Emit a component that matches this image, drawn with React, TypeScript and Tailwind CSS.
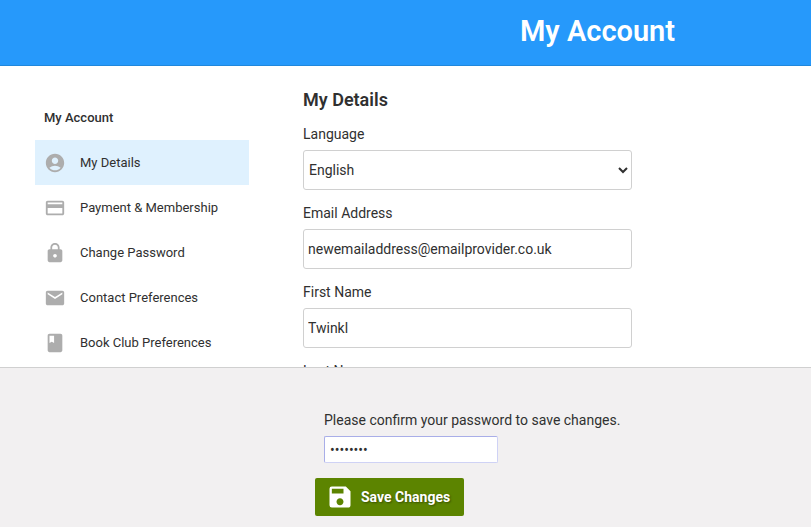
import { MdAccountCircle, MdClass, MdLock, MdMail, MdPayment, MdSave } from "react-icons/md";

const links = [
  { label: "My Details", Icon: MdAccountCircle, active: true },
  { label: "Payment & Membership", Icon: MdPayment, active: false },
  { label: "Change Password", Icon: MdLock, active: false },
  { label: "Contact Preferences", Icon: MdMail, active: false },
  { label: "Book Club Preferences", Icon: MdClass, active: false },
];

const fields = [
  { id: "email", label: "Email Address", value: "newemailaddress@emailprovider.co.uk" },
  { id: "first-name", label: "First Name", value: "Twinkl" },
  { id: "last-name", label: "Last Name", value: "" },
];

const control = "block h-10 w-full rounded-[3px] border border-[#d0d0d0] bg-white text-sm text-[#303030]";

export default function App() {
  return (
    <div className="flex h-screen flex-col overflow-hidden bg-white font-['Roboto','Liberation_Sans',sans-serif] text-[#303030]">
      <header className="flex h-[66px] shrink-0 items-center justify-center border-b border-[#2087dc] bg-[#2699fb] pb-1 pl-96">
        <h1 className="text-[29px] leading-9 font-semibold text-white">My Account</h1>
      </header>

      <main className="flex min-h-0 flex-1 overflow-hidden">
        <nav aria-label="Account" className="ml-[35px] w-[214px] shrink-0 pt-10">
          <h2 className="mb-[11px] px-[9px] text-[13px] leading-[23px] font-medium">My Account</h2>
          <ul>
            {links.map(({ label, Icon, active }) => (
              <li key={label}>
                <a
                  href="#"
                  aria-current={active ? "page" : undefined}
                  className={`flex h-[45px] items-center gap-3.5 px-[9px] text-[13px] ${active ? "bg-[#dff1fe]" : ""}`}
                >
                  <Icon className="size-[22px] text-[#adadad]" aria-hidden="true" />
                  {label}
                </a>
              </li>
            ))}
          </ul>
        </nav>

        <form className="ml-[54px] w-[329px] pt-5">
          <h2 className="text-lg leading-7 font-semibold">My Details</h2>
          <div className="mt-2 mb-[11px]">
            <label htmlFor="language" className="block pb-1 text-sm leading-6">Language</label>
            <select id="language" className={`${control} px-px`}>
              <option>English</option>
            </select>
          </div>
          {fields.map((field) => (
            <div key={field.id} className="mb-[11px]">
              <label htmlFor={field.id} className="block pb-1 text-sm leading-6">{field.label}</label>
              <input id={field.id} type="text" defaultValue={field.value} className={`${control} px-1`} />
            </div>
          ))}
        </form>
      </main>

      <footer className="h-40 shrink-0 border-t border-[#d0d0d0] bg-[#f2f0f1] pt-10 pl-[315px]">
        <div className="pl-[9px]">
          <label htmlFor="password" className="block pb-1 text-sm leading-6">
            Please confirm your password to save changes.
          </label>
          <input
            id="password"
            type="password"
            defaultValue="password"
            className="block h-[27px] w-[174px] rounded-[2px] border border-[#cfd2f5] border-t-[#a9aee8] border-l-[#a9aee8] bg-white px-[5px] text-sm"
          />
        </div>
        <button
          type="button"
          className="mt-[15px] flex h-[38px] items-center gap-[7px] rounded-[2px] bg-[#5c8400] px-[11px] pr-[14px] text-sm font-bold text-white text-shadow-[1px_1px_2px_#00000066]"
        >
          <MdSave className="size-7" aria-hidden="true" />
          Save Changes
        </button>
      </footer>
    </div>
  );
}
